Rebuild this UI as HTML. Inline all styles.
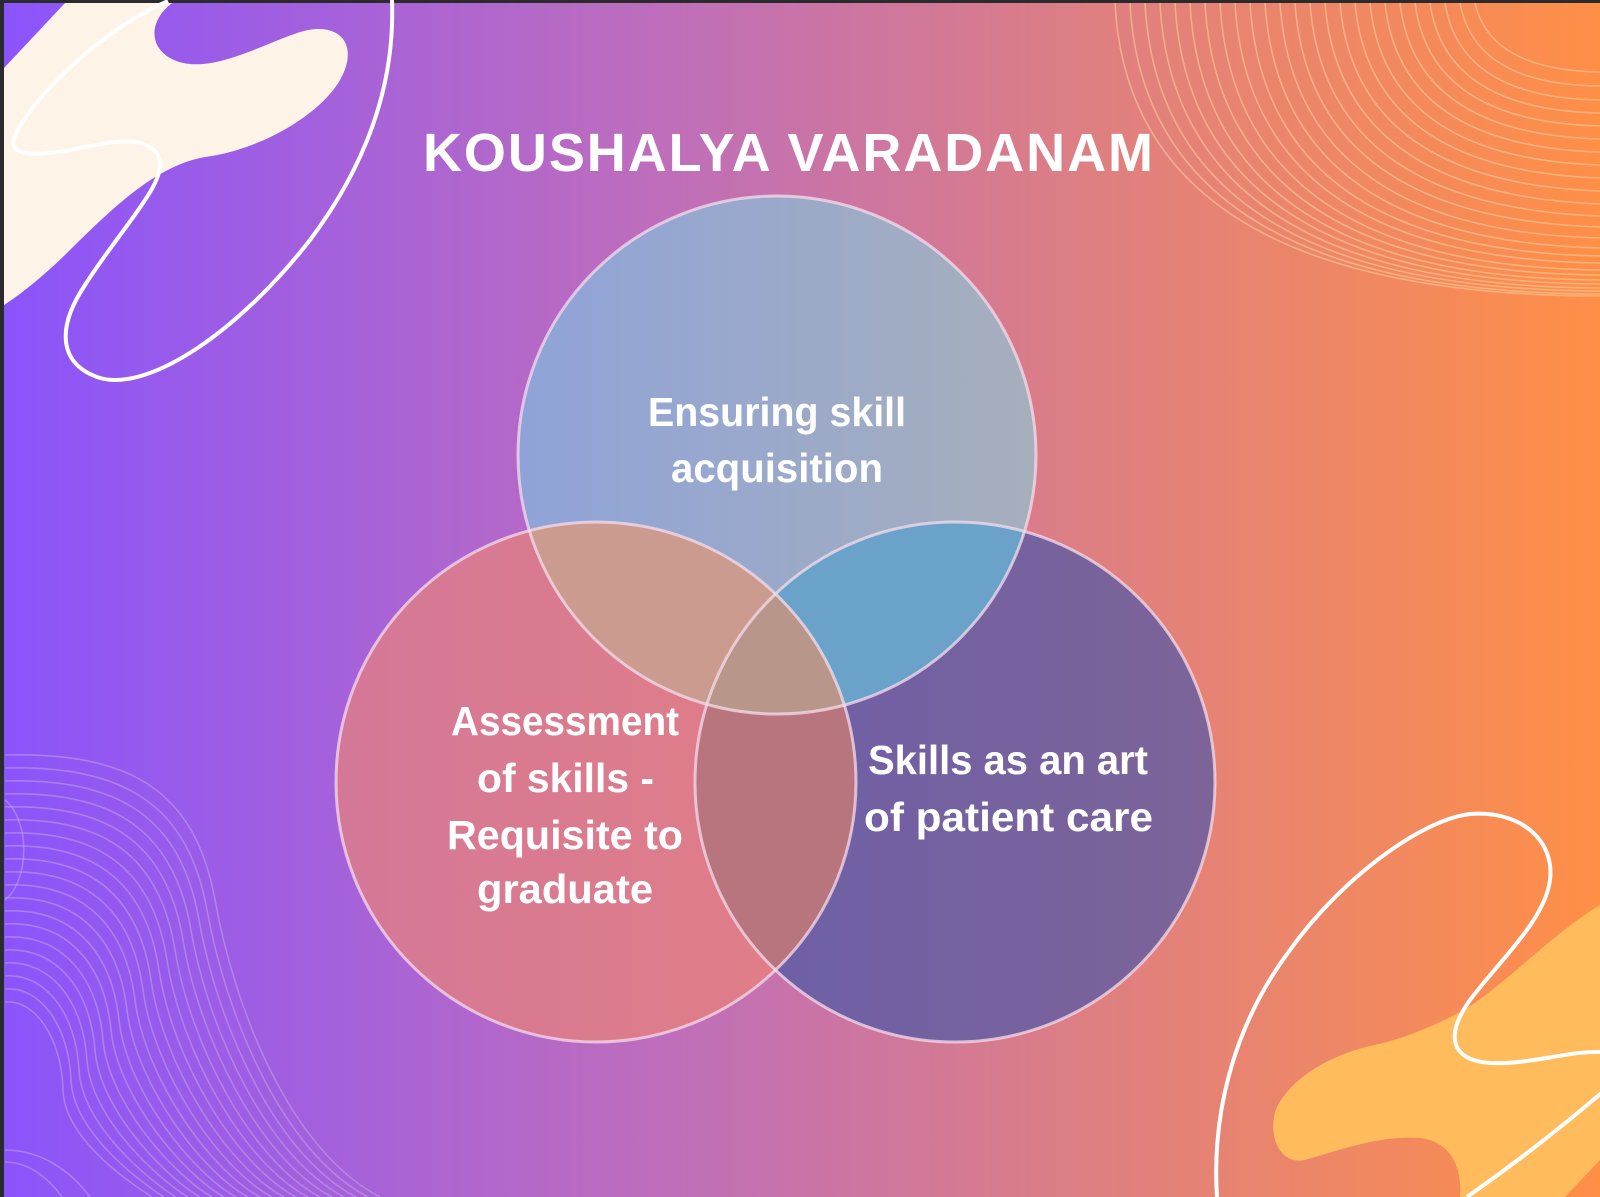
<!DOCTYPE html>
<html><head><meta charset="utf-8"><style>
html,body{margin:0;padding:0;width:1600px;height:1197px;overflow:hidden;background:#2b2b2e}
svg{display:block}
</style></head><body>
<svg width="1600" height="1197" viewBox="0 0 1600 1197" xmlns="http://www.w3.org/2000/svg">
<defs>
<linearGradient id="bg" x1="0" y1="0" x2="1" y2="0">
<stop offset="0" stop-color="#8b54fb"/>
<stop offset="0.4" stop-color="#bd6dbd"/>
<stop offset="0.7" stop-color="#e0807e"/>
<stop offset="1" stop-color="#ff8f47"/>
</linearGradient>
<clipPath id="cA"><circle cx="777" cy="455" r="259"/></clipPath>
<clipPath id="cB"><circle cx="596" cy="782" r="260"/></clipPath>
<clipPath id="cC"><circle cx="955" cy="782" r="260"/></clipPath>
<linearGradient id="gA" x1="0" x2="1"><stop offset="0" stop-color="#8fa3d8"/><stop offset="1" stop-color="#a6afbc"/></linearGradient>
<linearGradient id="gB" x1="0" x2="1"><stop offset="0" stop-color="#d47898"/><stop offset="1" stop-color="#e27e84"/></linearGradient>
<linearGradient id="gC" x1="0" x2="1"><stop offset="0" stop-color="#6c5ea8"/><stop offset="1" stop-color="#7c6498"/></linearGradient>
</defs>
<rect x="4" y="3" width="1596" height="1194" fill="url(#bg)"/>

<g fill="none" stroke="#ffd0a0" stroke-opacity="0.55" stroke-width="1.6">
<path d="M1475,3 Q1490,70 1600,72"/><path d="M1460,3 Q1475,85 1600,86"/><path d="M1445,3 Q1460,98 1600,100"/>
<path d="M1430,3 Q1445,110 1600,113"/><path d="M1415,3 Q1430,122 1600,126"/><path d="M1400,3 Q1415,134 1600,139"/>
<path d="M1385,3 Q1400,146 1600,152"/><path d="M1370,3 Q1385,158 1600,165"/><path d="M1355,3 Q1370,170 1600,178"/>
<path d="M1340,3 Q1355,182 1600,191"/><path d="M1325,3 Q1340,194 1600,204"/><path d="M1310,3 Q1325,206 1600,216"/>
<path d="M1295,3 Q1310,218 1600,227"/><path d="M1280,3 Q1295,230 1600,238"/><path d="M1265,3 Q1280,240 1600,248"/>
<path d="M1250,3 Q1265,250 1600,256"/><path d="M1235,3 Q1250,258 1600,263"/><path d="M1220,3 Q1235,266 1600,270"/>
<path d="M1205,3 Q1220,272 1600,275"/><path d="M1190,3 Q1205,278 1600,280"/><path d="M1175,3 Q1190,282 1600,284"/>
<path d="M1160,3 Q1175,286 1600,288"/><path d="M1145,3 Q1160,290 1600,291"/><path d="M1130,3 Q1145,293 1600,294"/>
<path d="M1115,3 Q1130,295 1600,296"/>
</g>

<g fill="none" stroke="#c8a8e8" stroke-opacity="0.5" stroke-width="1.6">
<path d="M5,755 C130,752 195,790 215,900 S290,1150 380,1197"/>
<path d="M5,768 C125,765 188,805 207,910 S282,1152 368,1197"/>
<path d="M5,781 C120,778 181,818 199,920 S274,1154 356,1197"/>
<path d="M5,794 C115,791 174,831 191,930 S266,1156 344,1197"/>
<path d="M5,807 C110,804 167,844 183,940 S258,1158 332,1197"/>
<path d="M5,820 C105,817 160,857 175,950 S250,1160 320,1197"/>
<path d="M5,833 C100,830 153,870 167,960 S242,1162 308,1197"/>
<path d="M5,846 C95,843 146,883 159,970 S234,1164 296,1197"/>
<path d="M5,859 C90,856 139,896 151,980 S226,1166 284,1197"/>
<path d="M5,872 C85,869 132,909 143,990 S218,1168 272,1197"/>
<path d="M5,885 C80,882 125,922 135,1000 S210,1170 260,1197"/>
<path d="M5,898 C75,895 118,935 127,1010 S202,1172 248,1197"/>
<path d="M5,911 C70,908 111,948 119,1020 S194,1174 236,1197"/>
<path d="M5,924 C65,921 104,961 111,1030 S186,1176 224,1197"/>
<path d="M5,937 C60,934 97,974 103,1040 S178,1178 212,1197"/>
<path d="M5,950 C55,947 90,987 95,1050 S170,1180 200,1197"/>
<path d="M5,963 C50,960 83,1000 87,1060 S162,1182 188,1197"/>
<path d="M5,976 C45,973 76,1013 79,1070 S154,1184 176,1197"/>
<path d="M5,989 C40,986 69,1026 71,1080 S146,1186 164,1197"/>
<path d="M5,1002 C35,999 62,1039 63,1090 S138,1188 152,1197"/>
<path d="M5,1150 C40,1150 70,1170 90,1197"/>
<path d="M5,1162 C30,1162 50,1180 62,1197"/>
<path d="M5,800 C30,820 30,880 5,900"/>
</g>

<path d="M4,68 L65,3 L172,3 C150,20 148,45 170,58 C205,78 260,45 300,32 C340,20 360,45 340,80 C320,115 260,150 205,157 C160,165 120,200 70,250 C45,275 20,295 4,305 Z" fill="#fdf3e6"/>
<path d="M168,1 C100,30 30,100 14,138 C8,158 40,155 70,150 C110,142 150,132 160,160 C165,185 120,230 85,285 C55,330 60,365 100,378 C150,392 240,330 310,240 C370,160 395,80 392,0" fill="none" stroke="#fff" stroke-width="4"/>

<path d="M1600,905 C1550,935 1500,990 1460,1012 C1430,1028 1400,1040 1370,1046 C1320,1058 1285,1085 1275,1112 C1268,1140 1282,1165 1305,1160 C1340,1150 1380,1135 1420,1138 C1450,1142 1462,1165 1460,1197 L1565,1197 L1600,1160 Z" fill="#ffbb5c"/>
<path d="M1217,1197 C1212,1120 1230,1030 1290,950 C1340,880 1420,820 1470,814 C1520,810 1555,840 1550,880 C1545,920 1500,960 1470,1000 C1445,1035 1450,1060 1490,1063 C1530,1065 1570,1050 1605,1052" fill="none" stroke="#fff" stroke-width="4"/>
<path d="M1605,1090 C1570,1120 1520,1160 1467,1197" fill="none" stroke="#fff" stroke-width="4"/>

<circle cx="596" cy="782" r="260" fill="url(#gB)"/>
<circle cx="955" cy="782" r="260" fill="url(#gC)"/>
<circle cx="777" cy="455" r="259" fill="url(#gA)"/>
<g clip-path="url(#cA)"><circle cx="596" cy="782" r="260" fill="#cb9b8f"/><circle cx="955" cy="782" r="260" fill="#6aa2c9"/></g>
<g clip-path="url(#cB)"><circle cx="955" cy="782" r="260" fill="#b8757e"/></g>
<g clip-path="url(#cB)"><g clip-path="url(#cC)"><circle cx="777" cy="455" r="259" fill="#b8978a"/></g></g>
<g fill="none" stroke="#f6dcec" stroke-opacity="0.75" stroke-width="3">
<circle cx="777" cy="455" r="259"/><circle cx="596" cy="782" r="260"/><circle cx="955" cy="782" r="260"/>
</g>

<g fill="#fff" font-family="Liberation Sans, sans-serif" font-weight="bold">
<text x="423" y="171" font-size="54" textLength="730" lengthAdjust="spacing">KOUSHALYA VARADANAM</text>
<g font-size="41">
<text x="648" y="426" textLength="258" lengthAdjust="spacingAndGlyphs">Ensuring skill</text>
<text x="671" y="482" textLength="212" lengthAdjust="spacingAndGlyphs">acquisition</text>
<text x="451" y="735" textLength="228" lengthAdjust="spacingAndGlyphs">Assessment</text>
<text x="477" y="792" textLength="177" lengthAdjust="spacingAndGlyphs">of skills -</text>
<text x="447" y="849" textLength="236" lengthAdjust="spacingAndGlyphs">Requisite to</text>
<text x="477" y="903" textLength="176" lengthAdjust="spacingAndGlyphs">graduate</text>
<text x="868" y="774" textLength="280" lengthAdjust="spacingAndGlyphs">Skills as an art</text>
<text x="864" y="831" textLength="289" lengthAdjust="spacingAndGlyphs">of patient care</text>
</g>
</g>
</svg>
</body></html>
